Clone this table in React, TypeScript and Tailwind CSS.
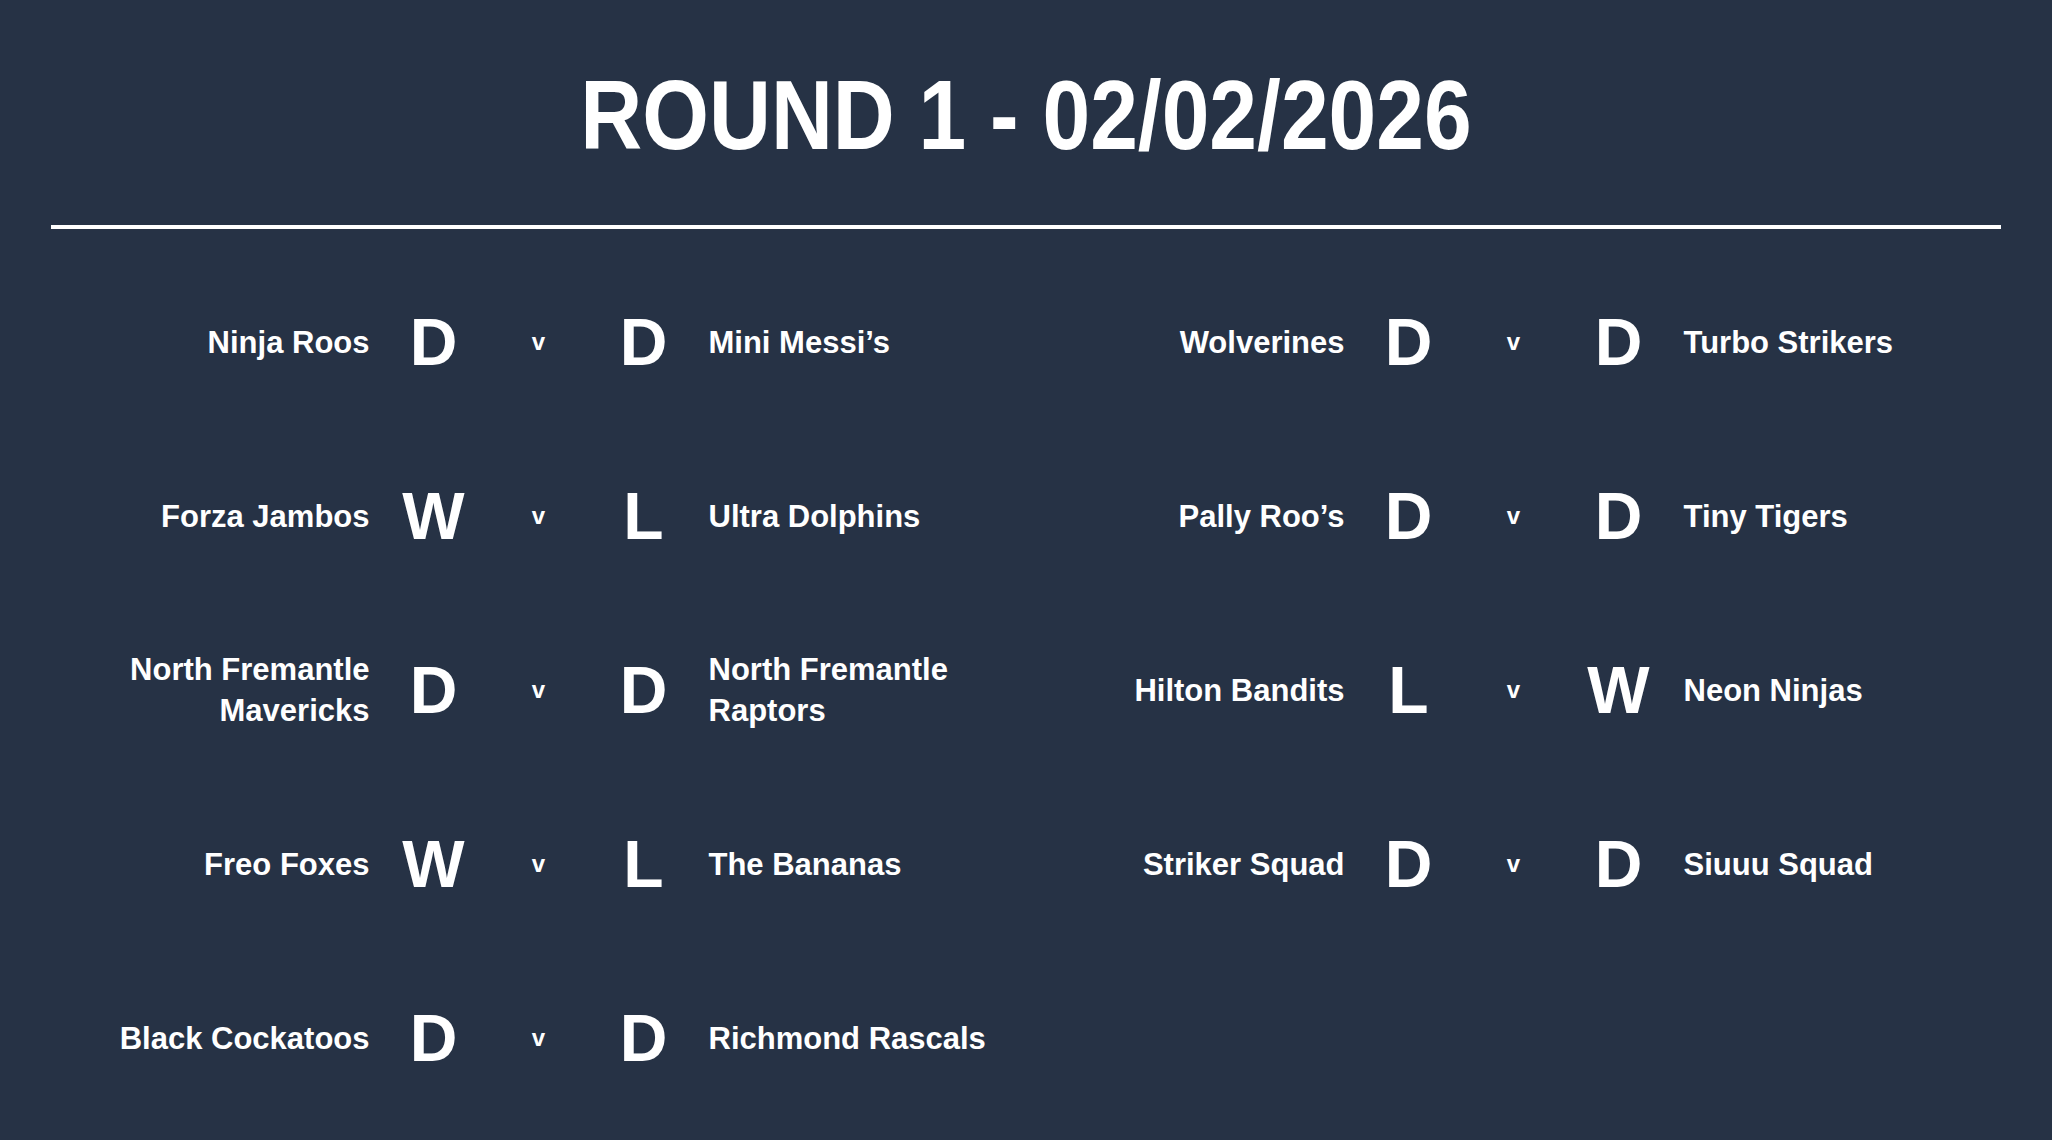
import React from "react";

type Match = {
  home: string;
  homeResult: string;
  away: string;
  awayResult: string;
};

const leftMatches: Match[] = [
  { home: "Ninja Roos", homeResult: "D", away: "Mini Messi’s", awayResult: "D" },
  { home: "Forza Jambos", homeResult: "W", away: "Ultra Dolphins", awayResult: "L" },
  { home: "North Fremantle Mavericks", homeResult: "D", away: "North Fremantle Raptors", awayResult: "D" },
  { home: "Freo Foxes", homeResult: "W", away: "The Bananas", awayResult: "L" },
  { home: "Black Cockatoos", homeResult: "D", away: "Richmond Rascals", awayResult: "D" },
];

const rightMatches: Match[] = [
  { home: "Wolverines", homeResult: "D", away: "Turbo Strikers", awayResult: "D" },
  { home: "Pally Roo’s", homeResult: "D", away: "Tiny Tigers", awayResult: "D" },
  { home: "Hilton Bandits", homeResult: "L", away: "Neon Ninjas", awayResult: "W" },
  { home: "Striker Squad", homeResult: "D", away: "Siuuu Squad", awayResult: "D" },
];

function MatchRow({ match }: { match: Match }) {
  return (
    <div className="h-[174px] grid grid-cols-[300px_128px_82px_128px_300px] justify-center items-center">
      <div className="text-right text-[31px] leading-[41px] font-bold">{match.home}</div>
      <div className="text-center text-[66px] leading-none font-bold">{match.homeResult}</div>
      <div className="text-center text-[24px] leading-none font-bold">v</div>
      <div className="text-center text-[66px] leading-none font-bold">{match.awayResult}</div>
      <div className="text-left text-[31px] leading-[41px] font-bold pl-px">{match.away}</div>
    </div>
  );
}

export default function App() {
  return (
    <div className="min-h-screen w-full bg-[#263245] text-white font-['Liberation_Sans',Arial,sans-serif]">
      <div className="px-[51px] pt-[66px]">
        <h1 className="text-center text-[98px] leading-none font-bold scale-x-[0.875]">
          ROUND 1 - 02/02/2026
        </h1>
        <div className="mt-[61px] h-[4px] bg-white" />

        <div className="mt-[26px] grid grid-cols-2">
          <div className="flex flex-col">
            {leftMatches.map((m, i) => (
              <MatchRow key={i} match={m} />
            ))}
          </div>
          <div className="flex flex-col">
            {rightMatches.map((m, i) => (
              <MatchRow key={i} match={m} />
            ))}
          </div>
        </div>
      </div>
    </div>
  );
}
